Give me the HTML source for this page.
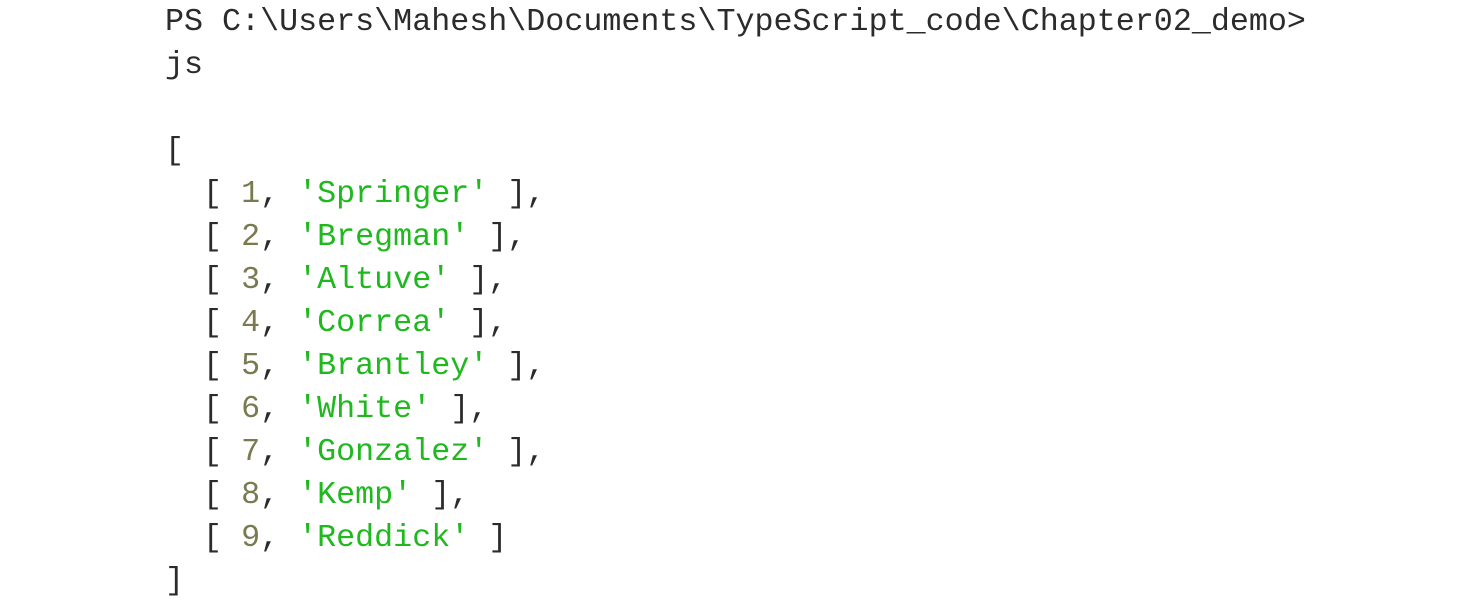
<html><head><style>
body{margin:0;background:#fff;width:1474px;height:603px;overflow:hidden}
pre{margin:0;position:absolute;left:165px;top:1px;font-family:"Liberation Mono",monospace;font-size:31.7px;line-height:43px;color:#2b2b2b}
.n{color:#7a7a50}.s{color:#1fb81f}
</style></head><body><pre>PS C:\Users\Mahesh\Documents\TypeScript_code\Chapter02_demo>
js

[
  [ <span class="n">1</span>, <span class="s">'Springer'</span> ],
  [ <span class="n">2</span>, <span class="s">'Bregman'</span> ],
  [ <span class="n">3</span>, <span class="s">'Altuve'</span> ],
  [ <span class="n">4</span>, <span class="s">'Correa'</span> ],
  [ <span class="n">5</span>, <span class="s">'Brantley'</span> ],
  [ <span class="n">6</span>, <span class="s">'White'</span> ],
  [ <span class="n">7</span>, <span class="s">'Gonzalez'</span> ],
  [ <span class="n">8</span>, <span class="s">'Kemp'</span> ],
  [ <span class="n">9</span>, <span class="s">'Reddick'</span> ]
]</pre></body></html>
